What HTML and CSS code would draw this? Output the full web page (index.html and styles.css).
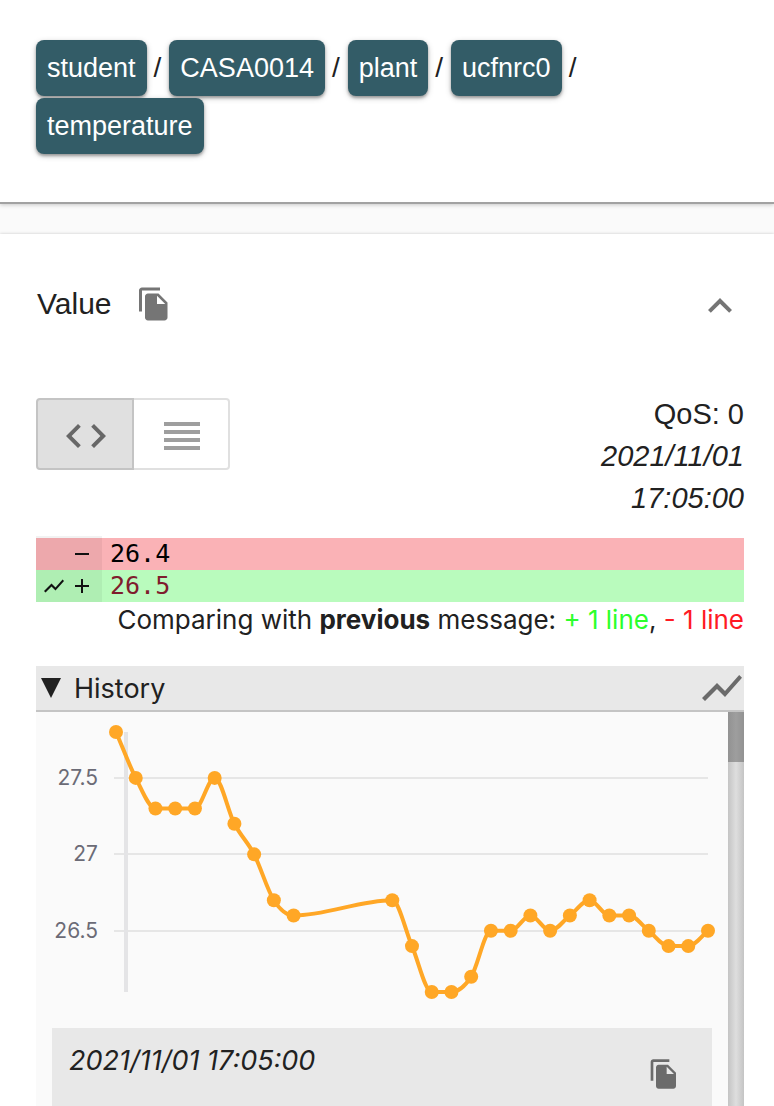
FILE: index.html
```html
<!DOCTYPE html>
<html lang="en">
<head>
<meta charset="utf-8">
<meta name="viewport" content="width=device-width, initial-scale=1">
<title>Topic details</title>
<link rel="stylesheet" href="styles.css">
</head>
<body>
<header class="topic">
  <ol class="crumbs">
    <li class="crumb"><button class="chip" type="button">student</button><span>/</span></li>
    <li class="crumb"><button class="chip" type="button">CASA0014</button><span>/</span></li>
    <li class="crumb"><button class="chip" type="button">plant</button><span>/</span></li>
    <li class="crumb"><button class="chip" type="button">ucfnrc0</button><span>/</span></li>
    <li class="crumb"><button class="chip" type="button">temperature</button></li>
  </ol>
</header>
<main class="panel">
  <div class="summary">
    <h2 class="title">Value</h2>
    <button class="icon-button" type="button" aria-label="Copy value">
      <svg class="icon icon-copy" viewBox="0 0 24 24"><path d="M16 1H4c-1.1 0-2 .9-2 2v14h2V3h12V1zm-1 4l6 6v10c0 1.1-.9 2-2 2H7.99C6.89 23 6 22.1 6 21V7c0-1.1.9-2 1.99-2h7zm-1 7h5.5L14 6.5V12z"/></svg>
    </button>
    <button class="icon-button collapse" type="button" aria-label="Collapse">
      <svg class="icon icon-large" viewBox="0 0 24 24"><path d="M12 8l-6 6 1.41 1.41L12 10.83l4.59 4.58L18 14z"/></svg>
    </button>
  </div>

  <div class="meta">
    <div class="toggle" role="group" aria-label="View mode">
      <button class="toggle-button selected" type="button" aria-label="Diff" aria-pressed="true">
        <svg class="icon icon-large" viewBox="0 0 24 24"><path d="M9.4 16.6L4.8 12l4.6-4.6L8 6l-6 6 6 6 1.4-1.4zm5.2 0l4.6-4.6-4.6-4.6L16 6l6 6-6 6-1.4-1.4z"/></svg>
      </button>
      <button class="toggle-button" type="button" aria-label="Raw" aria-pressed="false">
        <svg class="icon icon-large" viewBox="0 0 24 24"><path d="M3 15h18v-2H3v2zm0 4h18v-2H3v2zm0-8h18V9H3v2zm0-6v2h18V5H3z"/></svg>
      </button>
    </div>
    <div class="info">
      <span>QoS: 0</span>
      <time class="stamp" datetime="2021-11-01T17:05:00">2021/11/01 17:05:00</time>
    </div>
  </div>

  <div class="diff">
    <div class="gutter gutter-cap"></div>
    <div class="diff-line removed">
      <span class="gutter"><svg class="sign" viewBox="0 0 14 14"><path d="M0 6h14v2H0z"/></svg></span>
      <code>26.4</code>
    </div>
    <div class="diff-line added">
      <span class="gutter">
        <svg class="trend-small" viewBox="0 0 24 24"><path d="M3.5 18.49l6-6.01 4 4L22 6.92l-1.41-1.41-7.09 7.97-4-4L2 16.99z"/></svg>
        <svg class="sign" viewBox="0 0 14 14"><path d="M0 6h6V0h2v6h6v2H8v6H6V8H0z"/></svg>
      </span>
      <code>26.5</code>
    </div>
  </div>
  <p class="compare">Comparing with <b>previous</b> message: <span class="plus">+ 1 line</span>, <span class="minus">- 1 line</span></p>

  <section class="history">
    <div class="history-head">
      <svg class="arrow" viewBox="0 0 20 20"><path d="M0 0h20L10 20z"/></svg>
      <h3 class="history-title">History</h3>
      <button class="icon-button collapse" type="button" aria-label="Show chart">
        <svg class="icon icon-large" viewBox="1 0 24 24"><path d="M3.5 18.49l6-6.01 4 4L22 6.92l-1.41-1.41-7.09 7.97-4-4L2 16.99z" transform="translate(2 0)"/></svg>
      </button>
    </div>
    <div class="history-body">
      <div class="history-content">
        <svg class="chart" id="chart" viewBox="0 0 692 316" role="img" aria-label="Temperature history">
          <path class="grid" d="M78 66H672M78 142H672M78 219H672"/>
          <path class="axis" d="M90 20V280"/>
          <g class="tick">
            <text x="62" y="73">27.5</text>
            <text x="62" y="149">27</text>
            <text x="62" y="226">26.5</text>
          </g>
        </svg>
        <article class="entry">
          <time class="entry-time" datetime="2021-11-01T17:05:00">2021/11/01 17:05:00</time>
          <button class="icon-button entry-copy" type="button" aria-label="Copy message">
            <svg class="icon icon-entry" viewBox="0 0 24 24"><path d="M16 1H4c-1.1 0-2 .9-2 2v14h2V3h12V1zm-1 4l6 6v10c0 1.1-.9 2-2 2H7.99C6.89 23 6 22.1 6 21V7c0-1.1.9-2 1.99-2h7zm-1 7h5.5L14 6.5V12z"/></svg>
          </button>
        </article>
      </div>
      <div class="track"><div class="thumb"></div></div>
    </div>
  </section>
</main>
<script src="chart.js"></script>
</body>
</html>
```
FILE: styles.css
```css
* { box-sizing: border-box; }

body {
  margin: 0;
  min-height: 100vh;
  display: flex;
  flex-direction: column;
  background: #fafafa;
  color: #212121;
  font-family: "Liberation Sans", Arial, sans-serif;
}

button {
  margin: 0;
  padding: 0;
  border: 0;
  background: none;
  font: inherit;
  cursor: pointer;
}

.topic {
  padding: 40px 36px 48px;
  background: #fff;
  border-bottom: 2px solid #a2a2a2;
  box-shadow: 0 1px 4px rgba(0, 0, 0, 0.2);
}

.crumbs {
  display: flex;
  flex-wrap: wrap;
  gap: 2px 8px;
  margin: 0;
  padding: 0;
  list-style: none;
  font-size: 28px;
}

.crumb {
  display: flex;
  align-items: center;
  gap: 7px;
  line-height: 56px;
}

.chip {
  height: 56px;
  padding: 0 11px;
  border-radius: 8px;
  background: #335c67;
  color: #fff;
  font-size: 27px;
  line-height: 56px;
  box-shadow: 0 2px 6px rgba(0, 0, 0, 0.2), 0 2px 3px rgba(0, 0, 0, 0.3);
}

.panel {
  flex: 1;
  display: flex;
  flex-direction: column;
  margin-top: 30px;
  padding: 0 30px 0 36px;
  background: #fff;
  box-shadow: 0 0 3px rgba(0, 0, 0, 0.2);
}

.summary {
  display: flex;
  align-items: center;
  height: 140px;
}

.title {
  margin: 0 24px 0 1px;
  font-size: 30px;
  font-weight: 400;
}

.icon-button {
  display: flex;
  color: #757575;
}

.icon { fill: currentColor; }
.icon-copy { width: 36px; height: 36px; }
.icon-large { width: 48px; height: 48px; }
.icon-entry { width: 32px; height: 32px; }
.collapse { margin-left: auto; }
.summary .collapse { padding-top: 4px; }

.meta {
  display: flex;
  justify-content: space-between;
  align-items: flex-start;
  padding-top: 19px;
}

.toggle {
  display: flex;
  margin-top: 5px;
}

.toggle-button {
  display: flex;
  justify-content: center;
  align-items: center;
  width: 96px;
  height: 72px;
  padding: 4px 0 0 2px;
  border: 2px solid #e0e0e0;
  border-left: 0;
  border-radius: 0 4px 4px 0;
  color: #9e9e9e;
}

.toggle-button.selected {
  width: 98px;
  border: 2px solid #c4c4c4;
  border-radius: 4px 0 0 4px;
  background: #e0e0e0;
  color: #676767;
}

.info {
  display: flex;
  flex-direction: column;
  width: 160px;
  font-size: 29px;
  line-height: 42px;
  text-align: right;
}

.stamp { font-style: italic; }

.diff {
  margin-top: 17px;
  font-family: "DejaVu Sans Mono", monospace;
  font-size: 25px;
}

.diff-line {
  display: flex;
  height: 32px;
  line-height: 32px;
}

.diff-line code {
  padding-left: 8px;
  font: inherit;
}

.removed { background: #fab2b6; color: #000; }
.added { background: #b9fbbd; color: #7f1d2d; }

.gutter {
  display: flex;
  justify-content: flex-end;
  align-items: center;
  gap: 9px;
  width: 66px;
  padding-right: 13px;
  background: rgba(0, 0, 0, 0.05);
  fill: #111;
}

.gutter-cap { height: 2px; }

.sign { width: 14px; height: 14px; }
.trend-small { width: 24px; height: 24px; }

.compare {
  margin: 0;
  font-family: Inter, sans-serif;
  font-size: 26px;
  line-height: 36px;
  text-align: right;
}

.plus { color: #2cff2c; }
.minus { color: #ff1a24; }

.history {
  flex: 1;
  display: flex;
  flex-direction: column;
  margin-top: 28px;
}

.history-head {
  display: flex;
  align-items: center;
  height: 46px;
  padding-left: 5px;
  border-bottom: 2px solid #c4c4c4;
  background: #e8e8e8;
}

.history-head .icon-button { color: #6b6b6b; }

.arrow {
  width: 20px;
  height: 20px;
  fill: #212121;
}

.history-title {
  margin: 0 0 0 13px;
  font-family: Inter, sans-serif;
  font-size: 27px;
  font-weight: 400;
}

.history-body {
  flex: 1;
  display: flex;
  background: #fafafa;
}

.history-content {
  flex: 1;
  display: flex;
  flex-direction: column;
}

.chart {
  display: block;
  width: 100%;
}

.grid { fill: none; stroke: #e6e6e6; stroke-width: 2; }
.axis { fill: none; stroke: #e4e4e6; stroke-width: 4; }

.tick {
  fill: #6b6b76;
  font-family: Inter, sans-serif;
  font-size: 21px;
  text-anchor: end;
}

.series { fill: none; stroke: #ffa726; stroke-width: 4; }
.dot { fill: #ffa726; }

.entry {
  flex: 1;
  display: flex;
  justify-content: space-between;
  align-items: flex-start;
  min-height: 78px;
  margin: 0 16px;
  padding: 16px 32px 0 17px;
  background: #e8e8e8;
}

.entry-time {
  font-family: Inter, sans-serif;
  font-size: 27px;
  font-style: italic;
  line-height: 34px;
}

.entry-copy {
  margin-top: 14px;
  color: #6b6b6b;
}

.track {
  width: 16px;
  background: linear-gradient(90deg, #c4c4c4, #dedede 50%, #c4c4c4);
}

.thumb {
  height: 50px;
  background: linear-gradient(90deg, #929292, #9e9e9e 50%, #929292);
}
```
FILE: chart.js
```js
// Readings as [minute, degrees]; minutes 10-13 are missing.
const readings = [
  [0, 27.8], [1, 27.5], [2, 27.3], [3, 27.3], [4, 27.3], [5, 27.5], [6, 27.2],
  [7, 27.0], [8, 26.7], [9, 26.6], [14, 26.7], [15, 26.4], [16, 26.1],
  [17, 26.1], [18, 26.2], [19, 26.5], [20, 26.5], [21, 26.6], [22, 26.5],
  [23, 26.6], [24, 26.7], [25, 26.6], [26, 26.6], [27, 26.5], [28, 26.4],
  [29, 26.4], [30, 26.5]
];

const points = readings.map(([t, v]) => [80 + t * 592 / 30, 280 - (v - 26.1) * 260 / 1.7]);
const slopes = points.slice(1).map((p, i) => (p[1] - points[i][1]) / (p[0] - points[i][0]));

// Monotone cubic tangents keep the curve from overshooting its points.
const tangents = points.map((p, i) => {
  if (i === 0) return slopes[0];
  if (i === points.length - 1) return slopes[i - 1];
  const a = slopes[i - 1];
  const b = slopes[i];
  if (a * b <= 0) return 0;
  const ha = p[0] - points[i - 1][0];
  const hb = points[i + 1][0] - p[0];
  const mean = (a * hb + b * ha) / (ha + hb);
  return 2 * Math.sign(a) * Math.min(Math.abs(a), Math.abs(b), Math.abs(mean) / 2);
});

let d = `M${points[0]}`;
for (let i = 1; i < points.length; i++) {
  const [x0, y0] = points[i - 1];
  const [x1, y1] = points[i];
  const h = (x1 - x0) / 3;
  d += `C${x0 + h},${y0 + h * tangents[i - 1]},${x1 - h},${y1 - h * tangents[i]},${x1},${y1}`;
}

const chart = document.getElementById("chart");
function add(name, attributes) {
  const node = document.createElementNS("http://www.w3.org/2000/svg", name);
  for (const key in attributes) node.setAttribute(key, attributes[key]);
  chart.appendChild(node);
}

add("path", { class: "series", d });
points.forEach(([cx, cy]) => add("circle", { class: "dot", cx, cy, r: 7 }));
```
